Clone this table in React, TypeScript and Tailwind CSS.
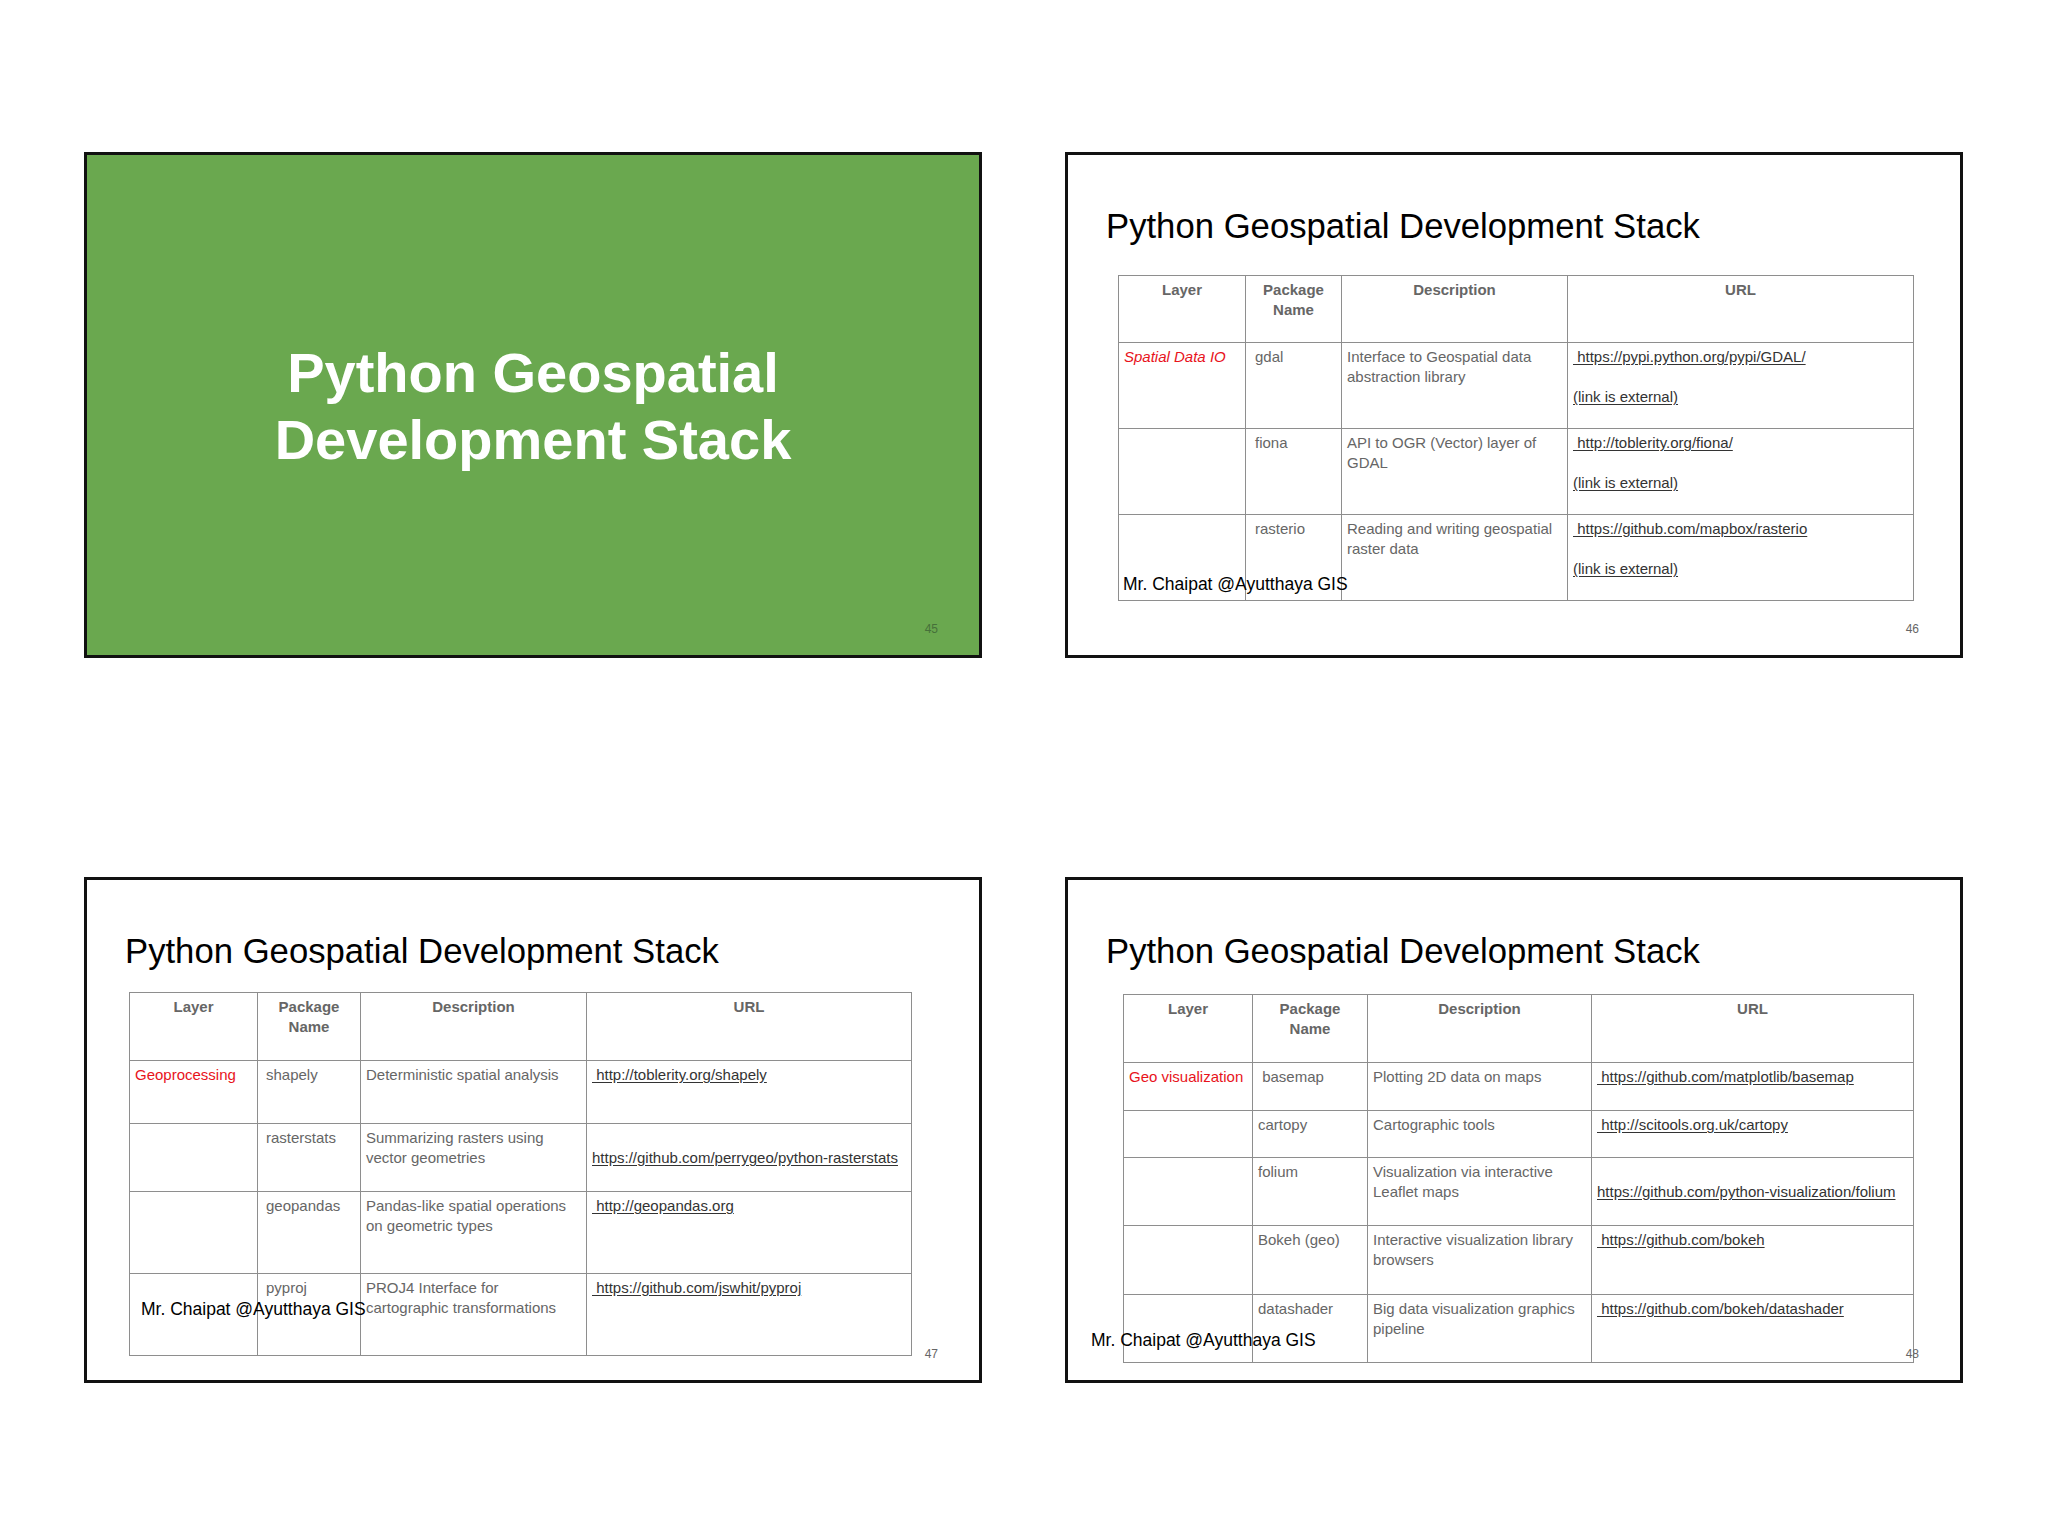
import React from "react";

type Row = {
  layer?: string;
  italic?: boolean;
  pkg: string;
  desc: string[];
  url: string[];
  h: number;
};

type TableSpec = {
  width: number;
  cols: number[];
  headH: number;
  pkgPad: string;
  rows: Row[];
};

const slide2: TableSpec = {
  width: 795,
  cols: [127, 96, 226, 346],
  headH: 67,
  pkgPad: "pl-[9px]",
  rows: [
    {
      layer: "Spatial Data IO",
      italic: true,
      pkg: "gdal",
      desc: ["Interface to Geospatial data", "abstraction library"],
      url: ["\u00a0https://pypi.python.org/pypi/GDAL/", "", "(link is external)"],
      h: 86,
    },
    {
      pkg: "fiona",
      desc: ["API to OGR (Vector) layer of", "GDAL"],
      url: ["\u00a0http://toblerity.org/fiona/", "", "(link is external)"],
      h: 86,
    },
    {
      pkg: "rasterio",
      desc: ["Reading and writing geospatial", "raster data"],
      url: ["\u00a0https://github.com/mapbox/rasterio", "", "(link is external)"],
      h: 86,
    },
  ],
};

const slide3: TableSpec = {
  width: 782,
  cols: [128, 103, 226, 325],
  headH: 68,
  pkgPad: "pl-[8px]",
  rows: [
    {
      layer: "Geoprocessing",
      pkg: "shapely",
      desc: ["Deterministic spatial analysis"],
      url: ["\u00a0http://toblerity.org/shapely"],
      h: 63,
    },
    {
      pkg: "rasterstats",
      desc: ["Summarizing rasters using", "vector geometries"],
      url: ["", "https://github.com/perrygeo/python-rasterstats"],
      h: 68,
    },
    {
      pkg: "geopandas",
      desc: ["Pandas-like spatial operations", "on geometric types"],
      url: ["\u00a0http://geopandas.org"],
      h: 82,
    },
    {
      pkg: "pyproj",
      desc: ["PROJ4 Interface for", "cartographic transformations"],
      url: ["\u00a0https://github.com/jswhit/pyproj"],
      h: 82,
    },
  ],
};

const slide4: TableSpec = {
  width: 790,
  cols: [129, 115, 224, 322],
  headH: 68,
  pkgPad: "pl-[5px]",
  rows: [
    {
      layer: "Geo visualization",
      pkg: "\u00a0basemap",
      desc: ["Plotting 2D data on maps"],
      url: ["\u00a0https://github.com/matplotlib/basemap"],
      h: 48,
    },
    {
      pkg: "cartopy",
      desc: ["Cartographic tools"],
      url: ["\u00a0http://scitools.org.uk/cartopy"],
      h: 47,
    },
    {
      pkg: "folium",
      desc: ["Visualization via interactive", "Leaflet maps"],
      url: ["", "https://github.com/python-visualization/folium"],
      h: 68,
    },
    {
      pkg: "Bokeh (geo)",
      desc: ["Interactive visualization library", "browsers"],
      url: ["\u00a0https://github.com/bokeh"],
      h: 69,
    },
    {
      pkg: "datashader",
      desc: ["Big data visualization graphics", "pipeline"],
      url: ["\u00a0https://github.com/bokeh/datashader"],
      h: 68,
    },
  ],
};

const StackTable = ({ spec }: { spec: TableSpec }) => (
  <table
    className="table-fixed border-collapse text-[15px] leading-[20px] text-[#666]"
    style={{ width: spec.width }}
  >
    <colgroup>
      {spec.cols.map((w, i) => (
        <col key={i} style={{ width: w }} />
      ))}
    </colgroup>
    <thead>
      <tr style={{ height: spec.headH }}>
        <th className="border border-[#8e8e8e] px-[5px] pt-[4px] align-top text-center font-bold">
          Layer
        </th>
        <th className="border border-[#8e8e8e] px-[5px] pt-[4px] align-top text-center font-bold">
          Package
          <br />
          Name
        </th>
        <th className="border border-[#8e8e8e] px-[5px] pt-[4px] align-top text-center font-bold">
          Description
        </th>
        <th className="border border-[#8e8e8e] px-[5px] pt-[4px] align-top text-center font-bold">
          URL
        </th>
      </tr>
    </thead>
    <tbody>
      {spec.rows.map((r, i) => (
        <tr key={i} style={{ height: r.h }}>
          <td className="border border-[#8e8e8e] pl-[5px] pt-[4px] align-top whitespace-nowrap">
            {r.layer && (
              <span className={r.italic ? "italic text-[#e8131b]" : "text-[#e8131b]"}>
                {r.layer}
              </span>
            )}
          </td>
          <td className={`border border-[#8e8e8e] ${spec.pkgPad} pt-[4px] align-top whitespace-nowrap`}>
            {r.pkg}
          </td>
          <td className="border border-[#8e8e8e] pl-[5px] pr-[2px] pt-[4px] align-top whitespace-nowrap">
            {r.desc.map((d, j) => (
              <div key={j}>{d}</div>
            ))}
          </td>
          <td className="border border-[#8e8e8e] pl-[5px] pt-[4px] align-top whitespace-nowrap text-[#333]">
            {r.url.map((u, j) => (
              <div key={j} className="h-[20px]">
                {u && <span className="underline underline-offset-2">{u}</span>}
              </div>
            ))}
          </td>
        </tr>
      ))}
    </tbody>
  </table>
);

const TableSlide = ({
  spec,
  num,
  tableLeft,
  tableTop,
  footLeft,
  footBottom,
}: {
  spec: TableSpec;
  num: string;
  tableLeft: string;
  tableTop: string;
  footLeft: string;
  footBottom: string;
}) => (
  <div className="relative w-[898px] h-[506px] border-[3px] border-[#111] bg-white">
    <div className="flex flex-col pt-[51px]">
      <h2 className="pl-[38px] text-[34.7px] leading-[40px] font-normal text-black">
        Python Geospatial Development Stack
      </h2>
      <div className={`${tableLeft} ${tableTop}`}>
        <StackTable spec={spec} />
      </div>
    </div>
    <div className={`absolute ${footLeft} ${footBottom} text-[17.5px] leading-[20px] text-black whitespace-nowrap`}>
      Mr. Chaipat @Ayutthaya GIS
    </div>
    <div className="absolute right-[41px] bottom-[19px] text-[12px] leading-[14px] text-[#666]">
      {num}
    </div>
  </div>
);

const App = () => {
  return (
    <div className="min-h-screen w-full bg-white font-['Liberation_Sans',Arial,sans-serif]">
      <div className="grid grid-cols-[898px_898px] gap-x-[83px] gap-y-[219px] pl-[84px] pt-[152px] pb-[153px]">
        {/* Title slide */}
        <div className="relative w-[898px] h-[506px] border-[3px] border-[#111] bg-[#6aa84f] flex items-center justify-center">
          <h1 className="text-center text-[56px] leading-[67px] font-bold text-white mt-[2px]">
            Python Geospatial
            <br />
            Development Stack
          </h1>
          <div className="absolute right-[41px] bottom-[19px] text-[12px] leading-[14px] text-[#46703a]">
            45
          </div>
        </div>

        <TableSlide
          spec={slide2}
          num="46"
          tableLeft="ml-[50px]"
          tableTop="mt-[29px]"
          footLeft="left-[55px]"
          footBottom="bottom-[61px]"
        />

        <TableSlide
          spec={slide3}
          num="47"
          tableLeft="ml-[42px]"
          tableTop="mt-[21px]"
          footLeft="left-[54px]"
          footBottom="bottom-[61px]"
        />

        <TableSlide
          spec={slide4}
          num="48"
          tableLeft="ml-[55px]"
          tableTop="mt-[23px]"
          footLeft="left-[23px]"
          footBottom="bottom-[30px]"
        />
      </div>
    </div>
  );
};

export default App;
